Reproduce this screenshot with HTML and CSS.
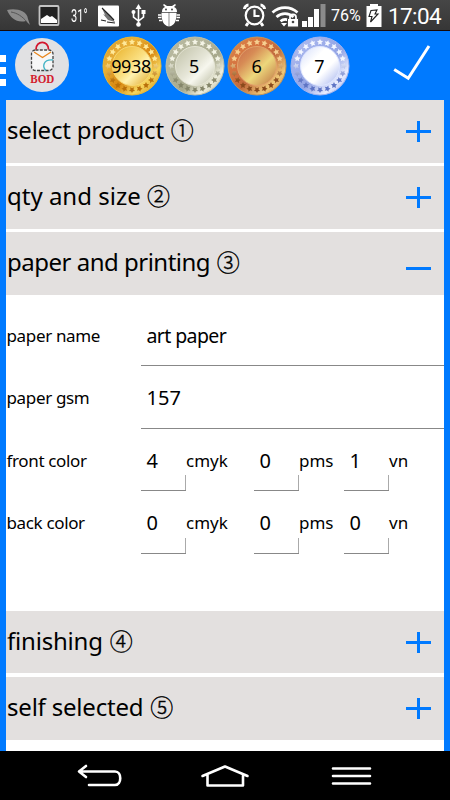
FILE: index.html
```html
<!DOCTYPE html>
<html lang="en">
<head>
<meta charset="utf-8">
<title>Quotation</title>
<link rel="stylesheet" href="styles.css">
</head>
<body>
<svg class="defs" aria-hidden="true">
  <defs>
    <path id="star" fill="#fff" d="M30 2.900l1 1.900 2.100.3-1.600 1.500.4 2.200L30 7.800l-1.900 1 .4-2.200-1.600-1.500 2.100-.3z"/>
    <g id="stars5">
      <use href="#star"/><use href="#star" transform="rotate(18 30 30)"/><use href="#star" transform="rotate(36 30 30)"/><use href="#star" transform="rotate(54 30 30)"/><use href="#star" transform="rotate(72 30 30)"/>
    </g>
    <mask id="stars">
      <use href="#stars5"/><use href="#stars5" transform="rotate(90 30 30)"/><use href="#stars5" transform="rotate(180 30 30)"/><use href="#stars5" transform="rotate(270 30 30)"/>
    </mask>
    <linearGradient id="gold-r" x1="0" y1="0" x2="1" y2="1"><stop offset="0" stop-color="#d9982a"/><stop offset=".3" stop-color="#e8b038"/><stop offset=".55" stop-color="#d78610"/><stop offset=".75" stop-color="#f6d65e"/><stop offset="1" stop-color="#c8820c"/></linearGradient>
    <linearGradient id="gold-c" x1="0" y1="0" x2="1" y2="1"><stop offset="0" stop-color="#e9b027"/><stop offset=".5" stop-color="#fbe184"/><stop offset=".62" stop-color="#fff2b0"/><stop offset="1" stop-color="#dda01c"/></linearGradient>
    <linearGradient id="gold-s" x2="0" y2="1"><stop offset=".4" stop-color="#ffe99a"/><stop offset=".75" stop-color="#b8700a"/></linearGradient>
    <linearGradient id="silver-r" x1="0" y1="0" x2="1" y2="1"><stop offset="0" stop-color="#b9baa0"/><stop offset=".35" stop-color="#b4b59b"/><stop offset=".6" stop-color="#a7a88b"/><stop offset=".78" stop-color="#eeeedd"/><stop offset="1" stop-color="#9fa184"/></linearGradient>
    <linearGradient id="silver-c" x1="0" y1="0" x2="1" y2="1"><stop offset="0" stop-color="#bfc0a6"/><stop offset=".5" stop-color="#e6e6d8"/><stop offset=".65" stop-color="#f7f7ee"/><stop offset="1" stop-color="#b9baa0"/></linearGradient>
    <linearGradient id="silver-s" x2="0" y2="1"><stop offset=".4" stop-color="#f4f4e6"/><stop offset=".75" stop-color="#85866a"/></linearGradient>
    <linearGradient id="bronze-r" x1="0" y1="0" x2="1" y2="1"><stop offset="0" stop-color="#d98a4c"/><stop offset=".35" stop-color="#d5713f"/><stop offset=".55" stop-color="#c06a3c"/><stop offset=".78" stop-color="#efc878"/><stop offset="1" stop-color="#b9733a"/></linearGradient>
    <linearGradient id="bronze-c" x1="0" y1="0" x2="1" y2="1"><stop offset="0" stop-color="#c86a4a"/><stop offset=".28" stop-color="#d78b55"/><stop offset=".58" stop-color="#ecd77c"/><stop offset="1" stop-color="#bd7041"/></linearGradient>
    <linearGradient id="bronze-s" x2="0" y2="1"><stop offset=".4" stop-color="#f6cf90"/><stop offset=".75" stop-color="#8a4a1c"/></linearGradient>
    <linearGradient id="blue-r" x1="0" y1="0" x2="1" y2="1"><stop offset="0" stop-color="#b3bff0"/><stop offset=".35" stop-color="#9dadea"/><stop offset=".55" stop-color="#93a4e4"/><stop offset=".78" stop-color="#e9edff"/><stop offset="1" stop-color="#7f92dc"/></linearGradient>
    <linearGradient id="blue-c" x1="0" y1="0" x2="1" y2="1"><stop offset="0" stop-color="#d3dcfb"/><stop offset=".35" stop-color="#fff"/><stop offset=".62" stop-color="#fff"/><stop offset="1" stop-color="#a0b0ee"/></linearGradient>
    <linearGradient id="blue-s" x2="0" y2="1"><stop offset=".4" stop-color="#f4f7ff"/><stop offset=".75" stop-color="#5f74c4"/></linearGradient>
  </defs>
</svg>

<div class="status">
  <svg class="status-icons" width="180" height="31" viewBox="0 0 180 31">
    <path fill="#8b8b8b" d="M7 10c8-2 20 0 21 9l2 6-4-4c-9 2-15-2-19-11z"/>
    <path fill="none" stroke="#555" d="M11 12c6 1 11 4 16 10"/>
    <rect x="39.500" y="6" width="19" height="19" rx="1" fill="#222" stroke="#c4c4c4" stroke-width="1.800"/>
    <path fill="#fff" d="M41 23v-4l6-4 3 2 2-1 5 4v3z"/>
    <rect x="98" y="5.500" width="21" height="21" rx="1" fill="#fff"/>
    <path fill="#777" d="M102 8l9 8 4 6-7-2-5-6 2 1z"/>
    <path stroke="#222" stroke-width="1.100" d="M102 8l12 12M101 20l5 1M107 22l8 1"/>
    <g fill="none" stroke="#fff" stroke-width="1.600"><path d="M138.500 7v18M133.500 13v4l5 4 5-4v-4"/></g>
    <g fill="#fff"><path d="M138.500 4l3 5h-6z"/><circle cx="133.500" cy="12" r="2"/><path d="M141.500 10h4v4h-4z"/><circle cx="138.500" cy="24.500" r="2.300"/></g>
    <path fill="#fff" d="M162 12c0-3 1-4 3-5l-2-2 1-1 3 2h5l3-2 1 1-2 2c2 1 3 2 3 5zM161.500 12.800h7.200v13.700c-5-1-7.200-5-7.200-13.700zM169.300 12.800h7.200c0 8.700-2 12.700-7.200 13.700z"/>
    <path stroke="#fff" stroke-width="1.500" fill="none" d="M161.500 15h-3.500M161.500 17.500h-3.500M162 20.500h-3M176.500 15h3.500M176.500 17.500h3.500M176 20.500h3"/>
    <circle cx="166" cy="9.500" r=".9" fill="#333"/><circle cx="172" cy="9.500" r=".9" fill="#333"/>
  </svg>
  <span class="temp">31°</span>
  <svg class="status-icons right" width="84" height="31" viewBox="242 0 84 31">
    <g fill="none" stroke="#fff" stroke-width="2.200"><circle cx="254.500" cy="15.500" r="8.800"/><path d="M254.500 9.500v6.500h5"/><path stroke-width="3" d="M244.500 9c0-2 2-4 4-4M264.500 9c0-2-2-4-4-4M248 23l-2 3M261 23l2 3"/></g>
    <g fill="none" stroke="#fff" stroke-width="2.700"><path d="M272.500 12.500c7-6.500 18-6.500 25 0M276.500 17c5-4.500 12-4.500 17 0M280.500 21.300c3-2.500 5-2.500 8-1"/></g>
    <path fill="#fff" d="M281 23h6l-3 3.500z"/>
    <path fill="#fff" stroke="#444" d="M287.500 18.500h11v8.500h-11z"/>
    <path fill="none" stroke="#fff" stroke-width="1.800" d="M290 19v-2c0-3.500 6-3.500 6 0v2"/><circle cx="293" cy="22" r="1.300" fill="#444"/>
    <path fill="#fff" d="M302 21h5v6h-5zM308 17h5v10h-5zM314 9h5v18h-5z"/><path fill="#8b8b8b" d="M320.500 4h5v23h-5z"/>
  </svg>
  <span class="percent">76%</span>
  <svg class="battery" width="16" height="31" viewBox="366 0 16 31"><path fill="#fff" d="M370 4h8v2h3.500v21h-15V6h3.500z"/><path fill="none" stroke="#222" stroke-width="1.100" d="M371 10.500l6-.5-2 4h3l-7.500 8 1.500-5.500h-3z"/></svg>
  <span class="clock">17:04</span>
</div>

<header class="bar">
  <div class="drawer"><i></i><i></i><i></i></div>
  <svg class="logo" width="54" height="54" viewBox="0 0 54 54">
    <circle cx="27" cy="27" r="27" fill="#e1e1e3"/>
    <rect x="16.500" y="12" width="21.500" height="20.500" rx="4" fill="#f7f7f7" stroke="#444" stroke-width="1.300" stroke-dasharray="3 1.300"/>
    <path d="M21 11.500c0-9.500 12.500-9.500 12.500 0" fill="none" stroke="#d3152c" stroke-width="1.800"/>
    <path d="M19 14l8.500 5.500L36 14" fill="none" stroke="#e8861c" stroke-width="1.300"/>
    <path d="M38 22c-10-1-11 7-7 10.500" fill="none" stroke="#43b3c4" stroke-width="1.400"/>
    <text x="27.300" y="44.800" text-anchor="middle" textLength="24" lengthAdjust="spacingAndGlyphs" class="logo-text">BOD</text>
  </svg>
  <div class="coins">
    <div class="coin"><svg viewBox="0 0 60 60"><circle cx="30" cy="30" r="29" fill="url(#gold-r)" stroke="#eeb92f"/><rect width="60" height="60" fill="url(#gold-s)" mask="url(#stars)"/><circle cx="30" cy="30" r="19.500" fill="url(#gold-c)" stroke="#f7d876"/></svg><span class="many">9938</span></div>
    <div class="coin"><svg viewBox="0 0 60 60"><circle cx="30" cy="30" r="29" fill="url(#silver-r)" stroke="#c0c1a8"/><rect width="60" height="60" fill="url(#silver-s)" mask="url(#stars)"/><circle cx="30" cy="30" r="19.500" fill="url(#silver-c)" stroke="#e5e5d5"/></svg><span>5</span></div>
    <div class="coin"><svg viewBox="0 0 60 60"><circle cx="30" cy="30" r="29" fill="url(#bronze-r)" stroke="#c59658"/><rect width="60" height="60" fill="url(#bronze-s)" mask="url(#stars)"/><circle cx="30" cy="30" r="19.500" fill="url(#bronze-c)" stroke="#e2a26b"/></svg><span>6</span></div>
    <div class="coin"><svg viewBox="0 0 60 60"><circle cx="30" cy="30" r="29" fill="url(#blue-r)" stroke="#a4b3ec"/><rect width="60" height="60" fill="url(#blue-s)" mask="url(#stars)"/><circle cx="30" cy="30" r="19.500" fill="url(#blue-c)" stroke="#dfe6ff"/></svg><span>7</span></div>
  </div>
  <svg class="check" width="40" height="40" viewBox="0 0 40 40"><path d="M1.200 24.500l14 8.800L36 1" fill="none" stroke="#fff" stroke-width="3"/></svg>
</header>

<main class="panel">
  <section class="head"><h2 class="t1">select product <b>①</b></h2><i class="sign plus"></i></section>
  <section class="head"><h2>qty and size <b>②</b></h2><i class="sign plus"></i></section>
  <section class="head"><h2 class="t3">paper and printing <b>③</b></h2><i class="sign minus"></i></section>
  <div class="form">
    <div class="row"><label>paper name</label><div class="field name">art paper</div></div>
    <div class="row"><label>paper gsm</label><div class="field">157</div></div>
    <div class="row"><label>front color</label><div class="num">4</div><span class="unit cmyk">cmyk</span><div class="num">0</div><span class="unit pms">pms</span><div class="num">1</div><span class="unit">vn</span></div>
    <div class="row"><label>back color</label><div class="num">0</div><span class="unit cmyk">cmyk</span><div class="num">0</div><span class="unit pms">pms</span><div class="num">0</div><span class="unit">vn</span></div>
  </div>
  <section class="head"><h2 class="t1">finishing <b>④</b></h2><i class="sign plus"></i></section>
  <section class="head"><h2 class="t1">self selected <b>⑤</b></h2><i class="sign plus"></i></section>
</main>

<nav class="nav">
  <svg width="450" height="49" viewBox="0 751 450 49" fill="none" stroke="#fff" stroke-width="2.600" stroke-linecap="round" stroke-linejoin="round">
    <path d="M86 766l-7 5.500 7 5.500M79 771.500h36c7 0 7 13.500 0 13.500H89"/>
    <path d="M202.500 776l22.500-9.500 22.500 9.500M207.500 774.500V785.500h35.500v-11"/>
    <path d="M333 768.500h37M333 776h37M333 783.500h37"/>
  </svg>
</nav>
</body>
</html>
```
FILE: styles.css
```css
* { box-sizing: border-box; }
body {
  margin: 0;
  width: 450px;
  height: 800px;
  overflow: hidden;
  display: flex;
  flex-direction: column;
  background: #007aff;
  color: #000;
  font-family: "Noto Sans", "Noto Sans CJK JP", sans-serif;
}
.defs { position: absolute; width: 0; height: 0; }
svg { display: block; flex: none; }

.status {
  height: 31px;
  flex: none;
  display: flex;
  background: linear-gradient(#464646, #363636);
  border-bottom: 1px solid #170808;
  color: #fff;
  font-family: Roboto, sans-serif;
  line-height: 32px;
  white-space: nowrap;
}
.temp {
  width: 24px;
  margin-left: -109px;
  font-size: 17.5px;
  transform: scaleX(.63);
  transform-origin: 0 0;
}
.right { margin-left: 147px; }
.percent { width: 40px; flex: none; padding-left: 5px; font-size: 16px; }
.clock { margin-left: 6px; font-size: 22.5px; letter-spacing: -.6px; }

.bar { height: 69px; flex: none; display: flex; }
.drawer {
  width: 6px;
  margin-top: 24px;
  display: flex;
  flex-direction: column;
  gap: 5px;
}
.drawer i { height: 7px; background: #fff; }
.logo { margin: 7px 0 0 9px; }
.logo-text { font: bold 13px "Liberation Serif", serif; fill: #d3202f; }
.coins { display: flex; gap: 2.6px; margin: 5px 0 0 33px; }
.coin { display: grid; width: 60px; height: 60px; place-items: center; }
.coin > * { grid-area: 1 / 1; }
.coin span { font-size: 18px; line-height: 24px; z-index: 1; margin-right: 1px; }
.coin .many { letter-spacing: -.4px; margin-right: 2px; }
.check { margin: 14px 0 0 43px; }

.panel {
  flex: 1;
  margin: 0 6px;
  background: #fff;
}
.head {
  height: 62.5px;
  margin-bottom: 3.7px;
  padding: 0 13px 0 1px;
  display: flex;
  align-items: center;
  justify-content: space-between;
  background: #e3e0df;
}
h2 {
  margin: 0 0 2px;
  font-size: 24px;
  font-weight: 400;
  line-height: 32px;
  white-space: nowrap;
}
h2 b {
  font: 300 23px/24px "Noto Sans CJK JP", sans-serif;
  letter-spacing: 0;
  -webkit-text-stroke: .4px #000;
}
.t1 { letter-spacing: -.2px; }
.t1 b { margin-left: .8px; }
.t3 { letter-spacing: -.5px; margin-bottom: 3.5px; }
.t3 b { margin-left: .8px; }
.sign { width: 25px; height: 21px; background: linear-gradient(#007aff, #007aff) center / 25px 3px no-repeat; }
.plus { background: linear-gradient(#007aff, #007aff) center / 25px 3px no-repeat, linear-gradient(#007aff, #007aff) center / 3px 21px no-repeat; }
.minus { margin-top: 9px; }
.form { height: 312.4px; padding-top: 5px; }
.row { height: 62.5px; display: flex; align-items: center; line-height: 24px; white-space: nowrap; }
label { width: 135px; padding: 2px 0 0 .5px; font-size: 17px; letter-spacing: -.35px; }
.field, .num { font-size: 20px; padding-left: 5.5px; }
.field {
  align-self: stretch;
  flex: 1;
  line-height: 64px;
  border-bottom: 1px solid #888;
}
.name { font-size: 19.5px; letter-spacing: -.6px; }
.num {
  width: 45px;
  align-self: stretch;
  line-height: 64px;
  background: linear-gradient(#888, #888) 0 100% / 45px 1px no-repeat, linear-gradient(#aaa, #aaa) 100% 100% / 1px 16px no-repeat;
}
.unit { font-size: 17px; padding-top: 2px; }
.cmyk { width: 68px; }
.pms { width: 45px; }
.nav { height: 49px; flex: none; background: #000; }
```
